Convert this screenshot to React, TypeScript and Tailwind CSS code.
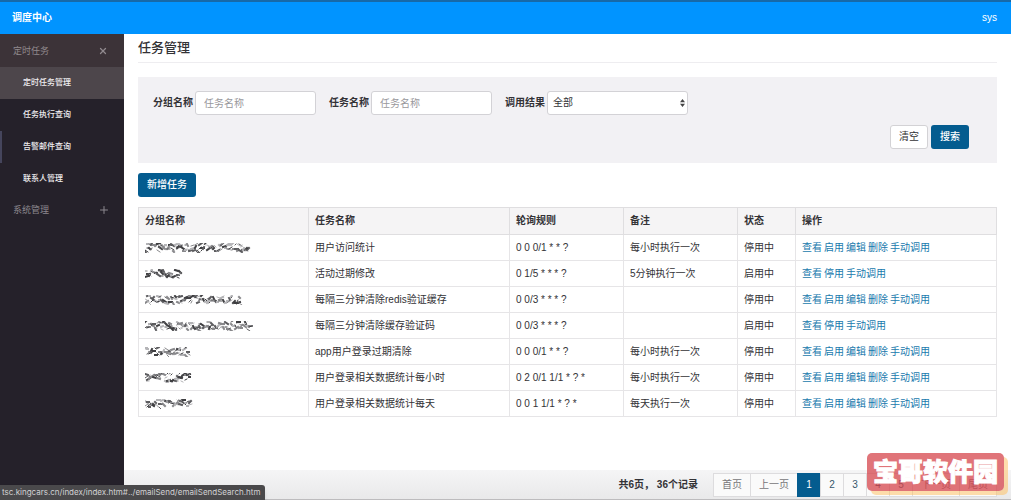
import clsx from "clsx";
import { Plus, X } from "lucide-react";

type Task = {
  maskWidth: number;
  name: string;
  cron: string;
  remark: string;
  running: boolean;
};

const menuItems = ["定时任务管理", "任务执行查询", "告警邮件查询", "联系人管理"];

const tasks: Task[] = [
  { maskWidth: 106, name: "用户访问统计", cron: "0 0 0/1 * * ?", remark: "每小时执行一次", running: false },
  { maskWidth: 38, name: "活动过期修改", cron: "0 1/5 * * * ?", remark: "5分钟执行一次", running: true },
  { maskWidth: 98, name: "每隔三分钟清除redis验证缓存", cron: "0 0/3 * * * ?", remark: "", running: false },
  { maskWidth: 108, name: "每隔三分钟清除缓存验证码", cron: "0 0/3 * * * ?", remark: "", running: true },
  { maskWidth: 46, name: "app用户登录过期清除", cron: "0 0 0/1 * * ?", remark: "每小时执行一次", running: false },
  { maskWidth: 48, name: "用户登录相关数据统计每小时", cron: "0 2 0/1 1/1 * ? *", remark: "每小时执行一次", running: false },
  { maskWidth: 48, name: "用户登录相关数据统计每天", cron: "0 0 1 1/1 * ? *", remark: "每天执行一次", running: false },
];

const stoppedActions = ["查看", "启用", "编辑", "删除", "手动调用"];
const runningActions = ["查看", "停用", "手动调用"];

const maskShades = ["#3f3f42", "#5c5c5f", "#88888b", "#b4b4b7"];

// Group names are masked: short broken strokes scattered over each character cell
const MaskedName = ({ width, seed }: { width: number; seed: number }) => {
  let state = seed * 7919 + 17;
  const next = (range: number) => {
    state = (state * 1103515 + 12345) % 2147483648;
    return (state >> 12) % range;
  };
  const strokes = [];
  for (let x = 0; x < width - 3; x += 2) {
    const count = x % 10 === 8 ? 1 : 2;
    for (let n = 0; n < count; n++) {
      const y = 1 + next(8);
      const dx = 1 + next(3);
      const dy = next(5) - 2;
      strokes.push(
        <path
          key={`${x}-${n}`}
          d={`M${x} ${y}l${dx} ${dy}`}
          stroke={maskShades[next(4)]}
          strokeWidth={n === 0 ? 2 : 1}
          strokeLinecap="square"
        />,
      );
    }
  }
  return (
    <svg width={width} height={10} viewBox={`0 0 ${width} 10`} className="block" aria-hidden="true">
      {strokes}
    </svg>
  );
};

const Header = () => (
  <header className="flex h-[34px] shrink-0 items-center justify-between border-t-2 border-[#1769a8] bg-[#0194ff] pr-[14px] pl-3 text-white">
    <span className="font-bold">调度中心</span>
    <a href="#user">sys</a>
  </header>
);

const Sidebar = () => (
  <nav className="w-[124px] shrink-0 bg-[#25212a]">
    <button className="flex h-[33px] w-full items-center justify-between bg-[#3c3338] pr-4 pl-[13px] text-[9px] text-[#918a8e]">
      定时任务
      <X size={10} strokeWidth={3} />
    </button>
    <ul>
      {menuItems.map((item, i) => (
        <li key={item}>
          <a
            href="#menu"
            className={clsx(
              "flex h-8 items-center border-l-2 pl-[21px] text-[8px] font-medium text-[#f0eef0]",
              i === 0 && "border-[#4d464b] bg-[#4d464b]",
              i === 2 && "border-[#45455c]",
              i !== 0 && i !== 2 && "border-transparent",
            )}
          >
            {item}
          </a>
        </li>
      ))}
    </ul>
    <button className="flex h-[30px] w-full items-center justify-between pr-[14px] pl-[13px] text-[9px] text-[#8c888e]">
      系统管理
      <Plus size={12} strokeWidth={2} />
    </button>
  </nav>
);

const TextField = ({ id, label }: { id: string; label: string }) => (
  <div className="flex items-center gap-[2px]">
    <label htmlFor={id} className="font-bold">
      {label}
    </label>
    <input
      id={id}
      type="text"
      placeholder="任务名称"
      className="h-6 w-[121px] rounded-[3px] border border-[#d3d2d6] bg-white px-2 placeholder:text-[#99989c]"
    />
  </div>
);

const SearchForm = () => (
  <form className="mt-[14px] bg-[#f2f1f4] pt-[14px] pr-7 pb-[14px] pl-[15px]">
    <div className="flex items-center gap-[13px]">
      <TextField id="group" label="分组名称" />
      <TextField id="task" label="任务名称" />
      <div className="flex items-center gap-[2px]">
        <label htmlFor="result" className="font-bold">
          调用结果
        </label>
        <div className="relative">
          <select
            id="result"
            className="h-6 w-[141px] appearance-none rounded-[3px] border border-[#d3d2d6] bg-white px-[5px]"
          >
            <option>全部</option>
          </select>
          <svg
            width="5"
            height="8"
            viewBox="0 0 5 8"
            className="pointer-events-none absolute top-2 right-[3px] fill-[#444]"
            aria-hidden="true"
          >
            <path d="M2.5 0 5 3.2H0zM2.5 8 0 4.8h5z" />
          </svg>
        </div>
      </div>
    </div>
    <div className="mt-[10px] flex justify-end gap-[3px]">
      <button type="reset" className="h-6 w-[38px] rounded-[3px] border border-[#d3d2d5] bg-white">
        清空
      </button>
      <button type="button" className="h-6 w-[38px] rounded-[3px] bg-[#045c8f] font-medium text-white">
        搜索
      </button>
    </div>
  </form>
);

const TaskTable = () => (
  <table className="mt-[10px] w-full table-fixed border-collapse text-left">
    <thead>
      <tr className="h-[27px] bg-[#f5f4f5]">
        <th className="w-[170px] border border-[#dfdee0] px-[6px]">分组名称</th>
        <th className="w-[201px] border border-[#dfdee0] px-[6px]">任务名称</th>
        <th className="w-[114px] border border-[#dfdee0] px-[6px]">轮询规则</th>
        <th className="w-[114px] border border-[#dfdee0] px-[6px]">备注</th>
        <th className="w-[58px] border border-[#dfdee0] px-[6px]">状态</th>
        <th className="border border-[#dfdee0] px-[6px]">操作</th>
      </tr>
    </thead>
    <tbody>
      {tasks.map((task, i) => (
        <tr key={task.name} className="h-[26px]">
          <td className="border border-[#e6e5e7] px-[6px] pt-px">
            <MaskedName width={task.maskWidth} seed={i + 1} />
          </td>
          <td className="border border-[#e6e5e7] px-[6px] pt-px">{task.name}</td>
          <td className="border border-[#e6e5e7] px-[6px] pt-px">{task.cron}</td>
          <td className="border border-[#e6e5e7] px-[6px] pt-px">{task.remark}</td>
          <td className="border border-[#e6e5e7] px-[6px] pt-px">{task.running ? "启用中" : "停用中"}</td>
          <td className="border border-[#e6e5e7] px-[6px] pt-px">
            <div className="flex gap-[2px] text-[#1879ad]">
              {(task.running ? runningActions : stoppedActions).map((action) => (
                <a key={action} href="#action">
                  {action}
                </a>
              ))}
            </div>
          </td>
        </tr>
      ))}
    </tbody>
  </table>
);

const PageButton = ({ label, active }: { label: string; active?: boolean }) => (
  <button
    className={clsx(
      "-ml-px h-6 border px-2",
      label.length === 1 && "w-6",
      active && "border-[#045c8f] bg-[#045c8f] text-white",
      !active && "border-[#dddcde] bg-[#fafafa]",
      !active && (label.length === 1 ? "text-[#35566b]" : "text-[#777679]"),
    )}
  >
    {label}
  </button>
);

const Footer = () => (
  <footer className="mt-auto flex h-[30px] items-center justify-end gap-4 border-b border-[#bdbcbe] bg-linear-to-b from-[#f5f5f6] to-[#e9e9ea] pr-[14px]">
    <span className="font-bold whitespace-pre">共6页， 36个记录</span>
    <div className="flex">
      <PageButton label="首页" />
      <PageButton label="上一页" />
      <PageButton label="1" active />
      <PageButton label="2" />
      <PageButton label="3" />
      <PageButton label="4" />
      <PageButton label="5" />
      <PageButton label="下一页" />
      <PageButton label="尾页" />
    </div>
  </footer>
);

export default function App() {
  return (
    <div className="relative flex min-h-screen flex-col bg-white font-['Liberation_Sans','Noto_Sans_CJK_SC',sans-serif] text-[10px] leading-[14px] text-[#333236]">
      <Header />
      <div className="flex grow">
        <Sidebar />
        <div className="flex min-w-0 grow flex-col">
          <main className="px-[14px] pb-4">
            <h1 className="flex h-[29px] items-center border-b border-[#eeedf0] text-[13px] font-medium">
              任务管理
            </h1>
            <SearchForm />
            <button className="mt-[10px] block h-6 w-[58px] rounded-[3px] bg-[#045c8f] font-medium text-white">
              新增任务
            </button>
            <TaskTable />
          </main>
          <Footer />
        </div>
      </div>
      <div className="absolute bottom-0 left-0 h-[15px] rounded-tr-[3px] bg-[#4a494b] pr-[5px] pl-[2px] font-['Inter',sans-serif] text-[8px] leading-[15px] text-[#d2d1d3] shadow-md">
        tsc.kingcars.cn/index/index.htm#../emailSend/emailSendSearch.htm
      </div>
      <div className="absolute right-[7px] bottom-[9px] flex h-[38px] w-[137px] items-center justify-center rounded-[5px] bg-[#d5454c]/75 text-[25px] leading-none font-black text-white shadow-[4px_4px_0_rgba(255,190,90,0.5)] [-webkit-text-stroke:1px_white]">
        宝哥软件园
      </div>
    </div>
  );
}
